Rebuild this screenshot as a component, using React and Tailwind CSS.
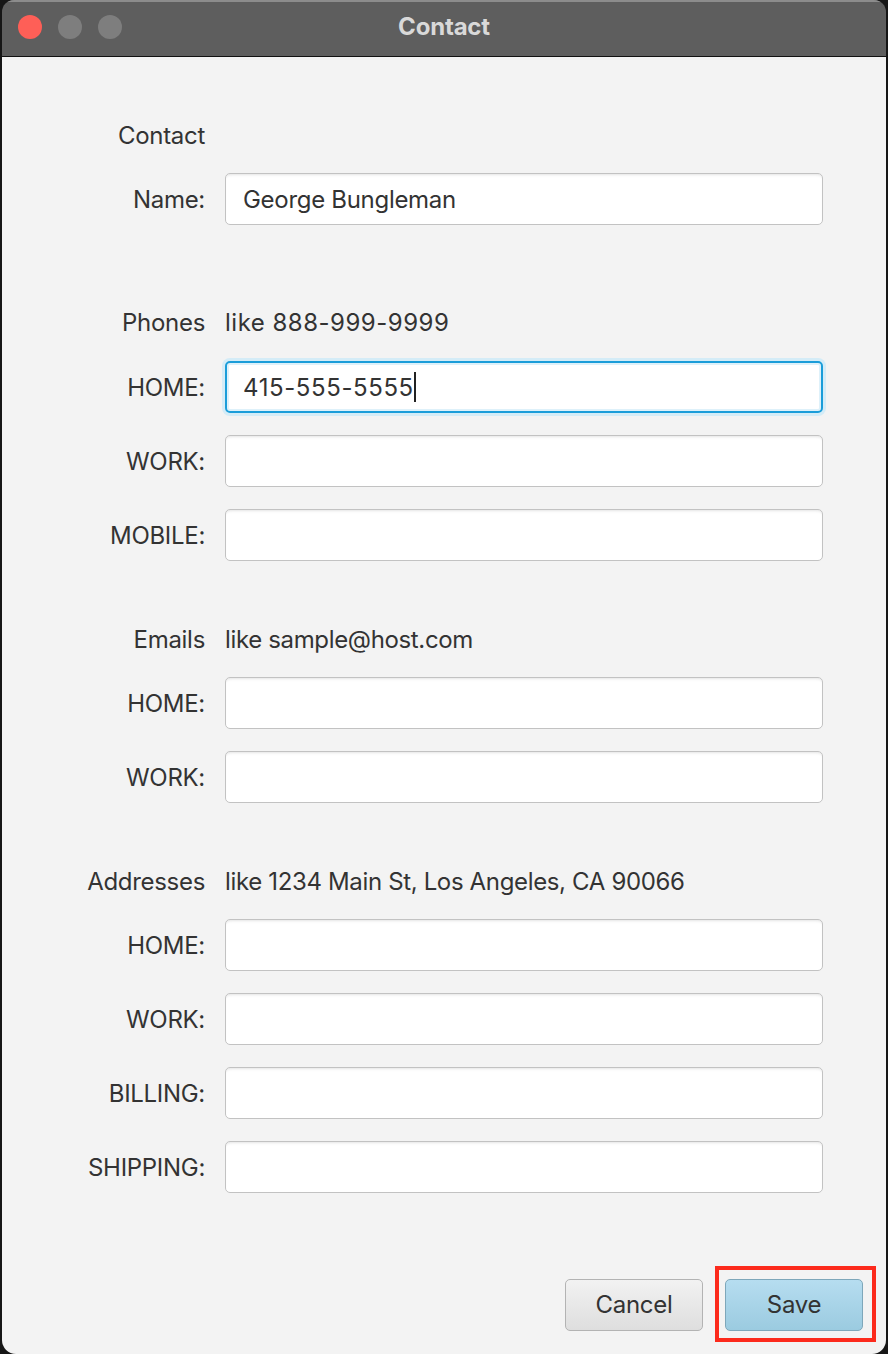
const font = { fontFamily: "Inter, 'Liberation Sans', sans-serif" };

const Field = ({ label, value, focused }) => (
  <div className="flex items-center h-[52px]">
    <span className="w-[204px] pr-[1px] text-right text-[24px] text-[#333333] tracking-[-0.3px] translate-y-[1px]">
      {label}
    </span>
    <div className="ml-[19px] w-[598px] h-[52px]">
      {focused ? (
        <div className="h-full rounded-[5px] border-2 border-[#1b9dd9] bg-white ring-[3px] ring-[#d4ecf7] shadow-[inset_0_0_0_2px_#def1fa] flex items-center pl-[16px]">
          <span className="text-[24px] text-[#333333] tracking-[0.6px] translate-y-[1px]">{value}</span>
          <span className="w-[2px] h-[30px] bg-[#222]" />
        </div>
      ) : (
        <div className="h-full rounded-[5px] border-[1.5px] border-[#c2c2c2] bg-white shadow-[inset_0_3px_3px_-2px_#e4e4e4] flex items-center pl-[17px]">
          <span className="text-[24px] text-[#333333] tracking-[-0.3px] translate-y-[1px]">{value}</span>
        </div>
      )}
    </div>
  </div>
);

const Header = ({ label, hint, nums }) => (
  <div className="flex items-center h-[52px] translate-y-[1px]">
    <span className="w-[204px] pr-[1px] text-right text-[24px] text-[#333333] tracking-[-0.3px]">
      {label}
    </span>
    <span className={nums ? "ml-[19px] text-[24px] text-[#333333] tracking-[0.5px]" : "ml-[19px] text-[24px] text-[#333333] tracking-[-0.35px]"}>
      {hint}
    </span>
  </div>
);

export default function App() {
  return (
    <div className="w-[888px] h-[1354px] bg-[#161616] flex" style={font}>
      <div className="mx-[2px] flex-1 flex flex-col rounded-t-[12px] rounded-b-[14px] overflow-hidden">
        {/* title bar */}
        <div className="h-[57px] shrink-0 bg-[#5e5e5e] border-t-2 border-[#8c8c8c] border-b border-b-[#111] relative flex items-center justify-center">
          <div className="absolute left-[16px] top-[13px] flex gap-[16px]">
            <span className="w-[24px] h-[24px] rounded-full bg-[#fe5f57]" />
            <span className="w-[24px] h-[24px] rounded-full bg-[#7e7e7e]" />
            <span className="w-[24px] h-[24px] rounded-full bg-[#7e7e7e]" />
          </div>
          <span className="text-[24px] font-bold text-[#d9d9d9] -mt-[4px] tracking-[-0.2px]">Contact</span>
        </div>

        {/* body */}
        <div className="flex-1 bg-[#f3f3f3] flex flex-col pt-[52px]">
          <Header label="Contact" />
          <div className="mt-[12px]">
            <Field label="Name:" value="George Bungleman" />
          </div>

          <div className="mt-[71px]">
            <Header label="Phones" hint="like 888-999-9999" nums />
          </div>
          <div className="mt-[13px] flex flex-col gap-[22px]">
            <Field label="HOME:" value="415-555-5555" focused />
            <Field label="WORK:" />
            <Field label="MOBILE:" />
          </div>

          <div className="mt-[52px]">
            <Header label="Emails" hint="like sample@host.com" />
          </div>
          <div className="mt-[12px] flex flex-col gap-[22px]">
            <Field label="HOME:" />
            <Field label="WORK:" />
          </div>

          <div className="mt-[52px]">
            <Header label="Addresses" hint="like 1234 Main St, Los Angeles, CA 90066" />
          </div>
          <div className="mt-[12px] flex flex-col gap-[22px]">
            <Field label="HOME:" />
            <Field label="WORK:" />
            <Field label="BILLING:" />
            <Field label="SHIPPING:" />
          </div>

          {/* buttons */}
          <div className="mt-[86px] flex justify-end gap-[22px] pr-[23px]">
            <button className="w-[138px] h-[52px] rounded-[5px] border-[1.5px] border-[#b3b3b3] bg-gradient-to-b from-[#f2f2f2] to-[#dedede] text-[24px] text-[#333333] tracking-[-0.3px]">
              Cancel
            </button>
            <div className="relative">
              <button className="w-[138px] h-[52px] rounded-[5px] border-[1.5px] border-[#7ea7ba] bg-gradient-to-b from-[#b6ddf0] to-[#9bcbe0] text-[24px] text-[#333333] tracking-[-0.3px]">
                Save
              </button>
              <span className="absolute -left-[10px] -top-[13px] -right-[13px] -bottom-[11px] border-[4px] border-[#fc2a1c] pointer-events-none" />
            </div>
          </div>
        </div>
      </div>
    </div>
  );
}
